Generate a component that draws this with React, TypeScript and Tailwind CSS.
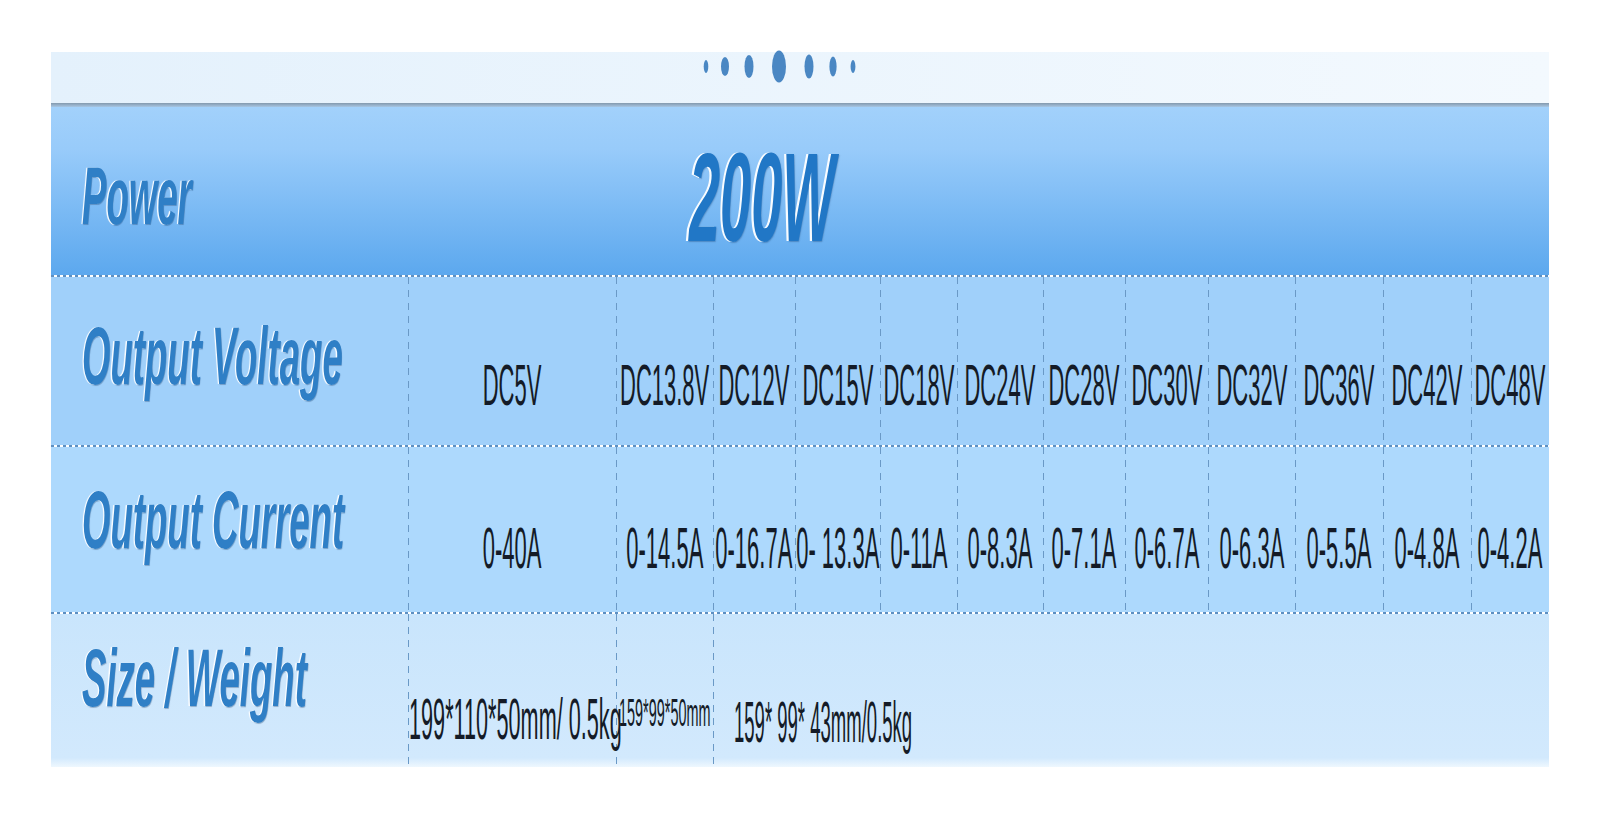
import React from 'react';

const COLS = 'grid-cols-[357px_208px_97px_82px_85px_77px_86px_82px_83px_87px_88px_88px_78px]';

const voltages = ['DC5V', 'DC13.8V', 'DC12V', 'DC15V', 'DC18V', 'DC24V', 'DC28V', 'DC30V', 'DC32V', 'DC36V', 'DC42V', 'DC48V'];
const currents = ['0-40A', '0-14.5A', '0-16.7A', '0- 13.3A', '0-11A', '0-8.3A', '0-7.1A', '0-6.7A', '0-6.3A', '0-5.5A', '0-4.8A', '0-4.2A'];

const vline =
  'bg-[repeating-linear-gradient(to_bottom,#6a99c6_0px,#6a99c6_7px,transparent_7px,transparent_13px)] bg-[length:1px_100%] bg-no-repeat bg-left';

const labelCls =
  "block whitespace-nowrap origin-left scale-x-[0.446] font-['Liberation_Sans',Arial,sans-serif] font-bold italic text-[82px] leading-none text-[#2f7fc6] [text-shadow:-3px_0_1px_rgba(255,255,255,0.95),1px_1px_1px_rgba(20,60,110,0.35)]";

const valueCls =
  "block whitespace-nowrap scale-x-[0.386] font-['Liberation_Sans',Arial,sans-serif] text-[57px] leading-none text-[#141b27]";

function DottedRule() {
  return (
    <div className="h-[2px] w-full bg-[repeating-linear-gradient(to_right,#5d8fc1_0px,#5d8fc1_3px,transparent_3px,transparent_6px)]" />
  );
}

function Dots() {
  const dots = [
    { cx: 10, rx: 2.3, ry: 6.5 },
    { cx: 29, rx: 4, ry: 9.5 },
    { cx: 53, rx: 4.5, ry: 11.5 },
    { cx: 83, rx: 7, ry: 16 },
    { cx: 113, rx: 4.5, ry: 12 },
    { cx: 137, rx: 3.6, ry: 10 },
    { cx: 157, rx: 2.4, ry: 6.5 },
  ];
  return (
    <svg width="170" height="40" viewBox="0 0 170 40" className="ml-[645px] block overflow-visible">
      {dots.map((d) => (
        <ellipse key={d.cx} cx={d.cx} cy={14.5} rx={d.rx} ry={d.ry} fill="#4a87c3" />
      ))}
    </svg>
  );
}

function DataRow({ label, values, bg, labelPt, valuePt }: { label: string; values: string[]; bg: string; labelPt: string; valuePt: string }) {
  return (
    <div className={`grid ${COLS} h-[168px] ${bg}`}>
      <div className={`pl-[31px] ${labelPt}`}>
        <span className={labelCls}>{label}</span>
      </div>
      {values.map((v) => (
        <div key={v} className={`flex justify-center ${vline} ${valuePt}`}>
          <span className={valueCls}>{v}</span>
        </div>
      ))}
    </div>
  );
}

export default function App() {
  return (
    <div className="w-[1600px] h-[822px] bg-white pt-[52px] pl-[51px]">
      <div className="w-[1498px]">
        {/* top strip */}
        <div className="h-[51px] bg-[linear-gradient(to_right,#e4f1fc,#f3f9fe)]">
          <Dots />
        </div>
        <div className="h-[4px] bg-[linear-gradient(to_bottom,#8399ad,#a7c6e3)]" />

        {/* power row */}
        <div className="flex h-[168px] bg-[linear-gradient(to_bottom,#a2d1fb,#98cbfa_25%,#5ca8ee)]">
          <div className="w-[357px] pl-[31px] pt-[48px]">
            <span className={labelCls}>Power</span>
          </div>
          <div className="ml-[281px] pt-[28px]">
            <span className="block whitespace-nowrap origin-left scale-x-[0.444] font-['Liberation_Sans',Arial,sans-serif] font-bold italic text-[126px] leading-none text-[#2177c6] [text-shadow:-5px_0_1px_rgba(255,255,255,0.95),1px_1px_2px_rgba(20,60,110,0.35)]">
              200W
            </span>
          </div>
        </div>

        <DottedRule />
        <DataRow label="Output Voltage" values={voltages} bg="bg-[#a0d0fa]" labelPt="pt-[38px]" valuePt="pt-[80px]" />
        <DottedRule />
        <div className="h-[165px] overflow-hidden">
          <DataRow label="Output Current" values={currents} bg="bg-[#add9fd]" labelPt="pt-[32px]" valuePt="pt-[73px]" />
        </div>
        <DottedRule />

        {/* size / weight row */}
        <div className={`grid ${COLS} h-[153px] bg-[linear-gradient(to_bottom,#c9e5fc,#d2e9fd_94%,#eef7fe)]`}>
          <div className="pl-[31px] pt-[23px]">
            <span className={labelCls}>Size / Weight</span>
          </div>
          <div className={`${vline} pt-[77px] pl-[1px]`}>
            <span className={`${valueCls} origin-left !scale-x-[0.38]`}>199*110*50mm/ 0.5kg</span>
          </div>
          <div className={`${vline} pt-[80px] pl-[3px]`}>
            <span className="block whitespace-nowrap origin-left scale-x-[0.38] font-['Liberation_Sans',Arial,sans-serif] text-[38px] leading-none text-[#141b27]">
              159*99*50mm
            </span>
          </div>
          <div className={`col-span-10 ${vline} pt-[80px] pl-[21px]`}>
            <span className={`${valueCls} origin-left !scale-x-[0.325]`}>159* 99* 43mm/0.5kg</span>
          </div>
        </div>
      </div>
    </div>
  );
}
